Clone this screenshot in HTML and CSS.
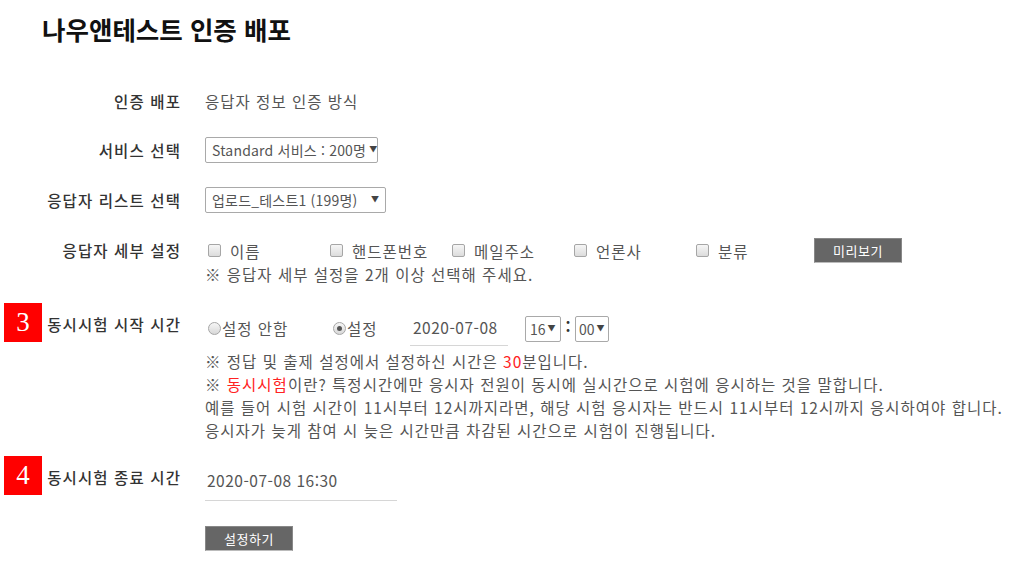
FILE: index.html
```html
<!DOCTYPE html>
<html lang="ko">
<head>
<meta charset="utf-8">
<title>나우앤테스트 인증 배포</title>
<link rel="stylesheet" href="styles.css">
</head>
<body>
<h1 class="title">나우앤테스트 인증 배포</h1>
<div class="form">
  <div class="row row-1">
    <div class="label">인증 배포</div>
    <div class="value">응답자 정보 인증 방식</div>
  </div>
  <div class="row row-sel">
    <div class="label">서비스 선택</div>
    <div class="value">
      <div class="select sel-service"><span class="sel-text">Standard 서비스 : 200명</span><span class="arrow">▼</span></div>
    </div>
  </div>
  <div class="row row-sel">
    <div class="label">응답자 리스트 선택</div>
    <div class="value">
      <div class="select sel-list"><span class="sel-text">업로드_테스트1 (199명)</span><span class="arrow">▼</span></div>
    </div>
  </div>
  <div class="row row-detail">
    <div class="label">응답자 세부 설정</div>
    <div class="value">
      <div class="checks">
        <label class="chk"><span class="box"></span><span>이름</span></label>
        <label class="chk"><span class="box"></span><span>핸드폰번호</span></label>
        <label class="chk"><span class="box"></span><span>메일주소</span></label>
        <label class="chk"><span class="box"></span><span>언론사</span></label>
        <label class="chk"><span class="box"></span><span>분류</span></label>
        <button class="btn btn-preview" type="button">미리보기</button>
      </div>
      <p class="note">※ 응답자 세부 설정을 2개 이상 선택해 주세요.</p>
    </div>
  </div>
  <div class="row row-start">
    <div class="label label-start"><span class="badge">3</span>동시시험 시작 시간</div>
    <div class="value">
      <div class="time-line">
        <label class="radio r-off"><span class="dot"></span><span>설정 안함</span></label>
        <label class="radio r-on"><span class="dot checked"></span><span>설정</span></label>
        <div class="date">2020-07-08</div>
        <div class="select sel-hour"><span class="sel-text">16</span><span class="arrow">▼</span></div>
        <span class="colon">:</span>
        <div class="select sel-min"><span class="sel-text">00</span><span class="arrow">▼</span></div>
      </div>
      <div class="notes">
        <p>※ 정답 및 출제 설정에서 설정하신 시간은 <span class="red">30</span>분입니다.</p>
        <p>※ <span class="red">동시시험</span>이란? 특정시간에만 응시자 전원이 동시에 실시간으로 시험에 응시하는 것을 말합니다.</p>
        <p>예를 들어 시험 시간이 11시부터 12시까지라면, 해당 시험 응시자는 반드시 11시부터 12시까지 응시하여야 합니다.</p>
        <p>응시자가 늦게 참여 시 늦은 시간만큼 차감된 시간으로 시험이 진행됩니다.</p>
      </div>
    </div>
  </div>
  <div class="row row-end">
    <div class="label label-end"><span class="badge">4</span>동시시험 종료 시간</div>
    <div class="value">
      <div class="end-date">2020-07-08 16:30</div>
    </div>
  </div>
  <div class="row row-submit">
    <div class="label"></div>
    <div class="value">
      <button class="btn btn-submit" type="button">설정하기</button>
    </div>
  </div>
</div>
</body>
</html>
```

FILE: styles.css
```css
* { box-sizing: border-box; }

html, body {
  margin: 0;
  padding: 0;
  background: #fff;
}

body {
  font-family: "Noto Sans CJK KR", "Noto Sans", sans-serif;
  font-size: 15.5px;
  line-height: 24px;
  color: #555;
  letter-spacing: 1px;
}

.title {
  margin: 0;
  padding: 12px 0 0 42px;
  font-size: 25.5px;
  line-height: 34px;
  font-weight: 700;
  color: #111;
  letter-spacing: 0;
}

.form {
  margin-top: 43px;
}

.row {
  display: flex;
  align-items: flex-start;
}

.label {
  width: 181px;
  flex: none;
  text-align: right;
  font-weight: 500;
  color: #333;
  position: relative;
  letter-spacing: 1.1px;
  margin-right: -1px;
}

.value {
  margin-left: 25px;
  flex: 1;
}

/* row spacing */
.row-sel { margin-top: 24px; }
.row-sel .label { line-height: 26px; }
.row-detail { margin-top: 25px; }
.row-start { margin-top: 29px; }
.row-end { margin-top: 24px; }
.row-submit { margin-top: 25px; }

/* selects */
.select {
  display: inline-flex;
  align-items: center;
  height: 26px;
  border: 1px solid #a9a9a9;
  border-radius: 2px;
  background: #fff;
  color: #555;
  font-size: 14px;
  letter-spacing: 0.2px;
  line-height: 24px;
  white-space: nowrap;
  overflow: hidden;
}

.sel-text { flex: none; }

.arrow {
  font-size: 8px;
  color: #444;
  letter-spacing: 0;
  line-height: 1;
  margin-top: -3px;
}

.sel-service {
  width: 173px;
  padding-left: 6px;
}
.sel-service .arrow { margin-left: 3px; }

.sel-list {
  width: 181px;
  padding-left: 6px;
  justify-content: space-between;
  padding-right: 6px;
}

.sel-hour {
  width: 36px;
  padding-left: 4px;
  margin-top: 1px;
  letter-spacing: 0;
}
.sel-min {
  width: 34px;
  padding-left: 3px;
  margin-top: 1px;
  letter-spacing: 0;
}
.sel-hour .arrow, .sel-min .arrow { margin-left: 2px; }

/* checkboxes */
.checks {
  display: grid;
  grid-template-columns: repeat(5, 122px) 88px;
  align-items: center;
  height: 24px;
}

.chk {
  display: flex;
  align-items: center;
}

.box {
  width: 13px;
  height: 13px;
  margin-left: 3px;
  margin-right: 9px;
  border: 1px solid #a6a6a6;
  border-radius: 2px;
  background: linear-gradient(#f6f6f6, #dcdcdc);
  flex: none;
}

.btn {
  font-family: "Noto Sans CJK KR", "Noto Sans", sans-serif;
  background: #666;
  color: #fff;
  border: 1px solid #888;
  border-bottom-color: #bbb;
  padding: 0;
  margin: 0;
  font-size: 13px;
  line-height: 23px;
  height: 25px;
  width: 88px;
  letter-spacing: 0.5px;
  cursor: pointer;
}

.btn-preview {
  margin-left: -1px;
}

.note {
  margin: 0;
}

/* start time */
.label-start { line-height: 18px; }

.badge {
  position: absolute;
  left: 4px;
  width: 38px;
  height: 39px;
  background: #f00;
  color: #fff;
  font-family: "Liberation Serif", serif;
  font-weight: 400;
  font-size: 27px;
  line-height: 39px;
  text-align: center;
  letter-spacing: 0;
}

.label-start .badge { top: -12px; }

.time-line {
  display: flex;
  align-items: flex-start;
  height: 35px;
}

.radio {
  display: flex;
  align-items: center;
  height: 26px;
}

.r-off { width: 125px; }
.r-on { width: 80px; }

.dot {
  width: 13px;
  height: 13px;
  margin-left: 3px;
  margin-right: 1px;
  border: 1px solid #a6a6a6;
  border-radius: 50%;
  background: linear-gradient(#f6f6f6, #d8d8d8);
  flex: none;
  display: flex;
  align-items: center;
  justify-content: center;
}

.dot.checked::after {
  content: "";
  width: 5px;
  height: 5px;
  border-radius: 50%;
  background: #555;
}

.date {
  width: 98px;
  height: 31px;
  padding-left: 3px;
  border-bottom: 1px solid #d6d6d6;
  letter-spacing: 0.5px;
}

.sel-hour { margin-left: 17px; }

.colon {
  display: block;
  width: 14px;
  text-align: center;
  color: #333;
  font-weight: 700;
  line-height: 22px;
  letter-spacing: 0;
}

.notes p {
  margin: 0;
  line-height: 23px;
  white-space: nowrap;
}

.red { color: #f22; }

/* end time */
.label-end { line-height: 22px; }
.label-end .badge { top: -10px; }

.end-date {
  width: 192px;
  padding: 2px 0 8px 2px;
  border-bottom: 1px solid #d6d6d6;
  letter-spacing: 0.5px;
}

.btn-submit {
  display: block;
}
```
